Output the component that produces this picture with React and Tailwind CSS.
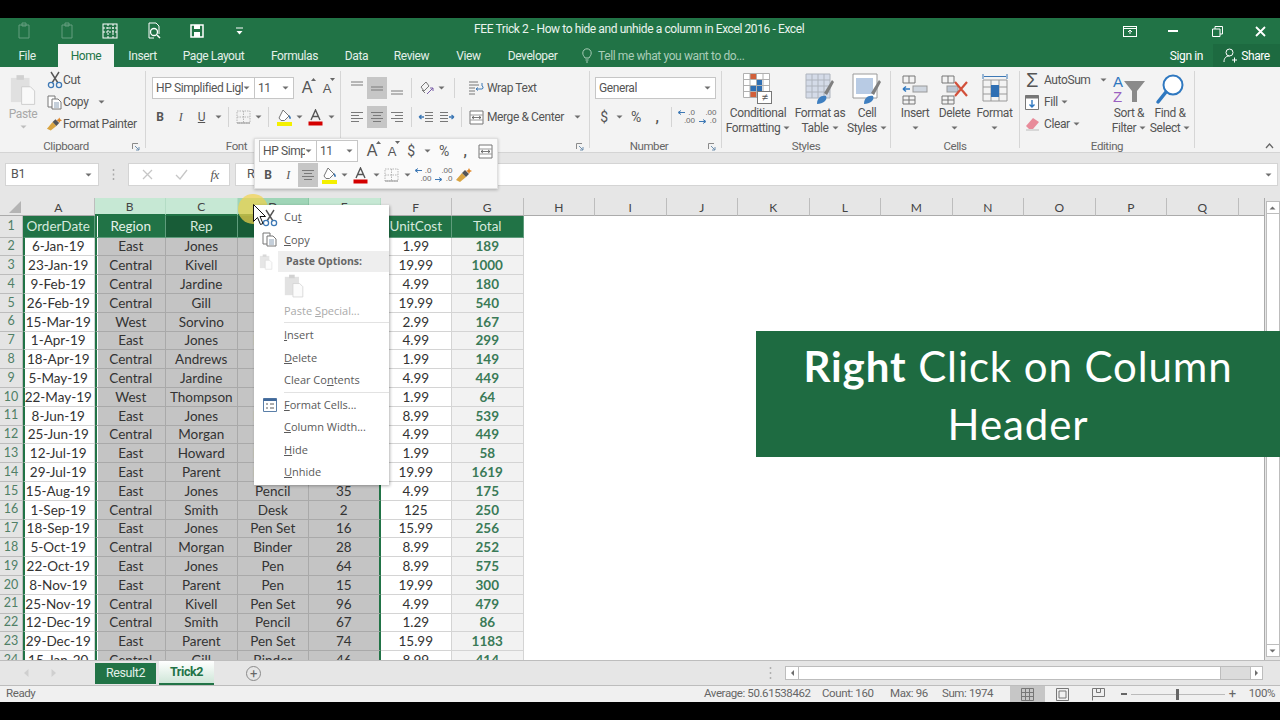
import clsx from 'clsx'

const TABS = [
  ['Insert', 'w-[57px]'],
  ['Page Layout', 'w-[85px]'],
  ['Formulas', 'w-[77px]'],
  ['Data', 'w-[47px]'],
  ['Review', 'w-[63px]'],
  ['View', 'w-[51px]'],
  ['Developer', 'w-[77px]'],
]

const COLS = ['A', 'B', 'C', 'D', 'E', 'F', 'G', 'H', 'I', 'J', 'K', 'L', 'M', 'N', 'O', 'P', 'Q']

const HEAD = ['OrderDate', 'Region', 'Rep', 'Item', 'Units', 'UnitCost', 'Total']

const ROWS = [
  ['6-Jan-19', 'East', 'Jones', 'Pencil', '95', '1.99', '189'],
  ['23-Jan-19', 'Central', 'Kivell', 'Binder', '50', '19.99', '1000'],
  ['9-Feb-19', 'Central', 'Jardine', 'Pencil', '36', '4.99', '180'],
  ['26-Feb-19', 'Central', 'Gill', 'Pen', '27', '19.99', '540'],
  ['15-Mar-19', 'West', 'Sorvino', 'Pencil', '56', '2.99', '167'],
  ['1-Apr-19', 'East', 'Jones', 'Binder', '60', '4.99', '299'],
  ['18-Apr-19', 'Central', 'Andrews', 'Pencil', '75', '1.99', '149'],
  ['5-May-19', 'Central', 'Jardine', 'Pencil', '90', '4.99', '449'],
  ['22-May-19', 'West', 'Thompson', 'Pencil', '32', '1.99', '64'],
  ['8-Jun-19', 'East', 'Jones', 'Binder', '60', '8.99', '539'],
  ['25-Jun-19', 'Central', 'Morgan', 'Pencil', '90', '4.99', '449'],
  ['12-Jul-19', 'East', 'Howard', 'Binder', '29', '1.99', '58'],
  ['29-Jul-19', 'East', 'Parent', 'Binder', '81', '19.99', '1619'],
  ['15-Aug-19', 'East', 'Jones', 'Pencil', '35', '4.99', '175'],
  ['1-Sep-19', 'Central', 'Smith', 'Desk', '2', '125', '250'],
  ['18-Sep-19', 'East', 'Jones', 'Pen Set', '16', '15.99', '256'],
  ['5-Oct-19', 'Central', 'Morgan', 'Binder', '28', '8.99', '252'],
  ['22-Oct-19', 'East', 'Jones', 'Pen', '64', '8.99', '575'],
  ['8-Nov-19', 'East', 'Parent', 'Pen', '15', '19.99', '300'],
  ['25-Nov-19', 'Central', 'Kivell', 'Pen Set', '96', '4.99', '479'],
  ['12-Dec-19', 'Central', 'Smith', 'Pencil', '67', '1.29', '86'],
  ['29-Dec-19', 'East', 'Parent', 'Pen Set', '74', '15.99', '1183'],
  ['15-Jan-20', 'Central', 'Gill', 'Binder', '46', '8.99', '414'],
]

function Chev({ className }) {
  return (
    <svg width="7" height="4" viewBox="0 0 7 4" className={clsx('shrink-0', className)}>
      <path d="M0.5 0.5h6L3.5 3.5z" fill="#6e6e6e" />
    </svg>
  )
}

function Slot({ w, className, children }) {
  return <div className={clsx('flex items-center justify-center h-full shrink-0', w, className)}>{children}</div>
}

function Sep({ w = 'w-[9px]' }) {
  return (
    <Slot w={w}>
      <div className="w-px h-[20px] bg-[#d4d4d4]" />
    </Slot>
  )
}

function Launcher() {
  return (
    <svg width="8" height="8" viewBox="0 0 8 8" className="shrink-0 mr-[5px]">
      <path d="M0.5 6V0.5H6" fill="none" stroke="#8a8a8a" />
      <path d="M3 3l4 4M4 7h3V4" fill="none" stroke="#6f8fae" />
    </svg>
  )
}

function Group({ w, label, launcher, className, children }) {
  return (
    <div className={clsx('flex flex-col my-[4px] border-r border-[#d6d6d6] shrink-0', w)}>
      <div className={clsx('h-[71px] shrink-0', className)}>{children}</div>
      <div className="h-[10px] shrink-0 flex items-center text-[11.5px] text-[#666]">
        <span className="flex-1 text-center">{label}</span>
        {launcher && <Launcher />}
      </div>
    </div>
  )
}

function Combo({ w, text, className }) {
  return (
    <div className={clsx('h-[22px] bg-white border border-[#c6c6c6] flex items-center justify-between pl-[3px] pr-[4px] text-[12px] text-[#555] shrink-0', w, className)}>
      <span className="whitespace-nowrap overflow-hidden">{text}</span>
      <Chev />
    </div>
  )
}

function GrowA({ down }) {
  return (
    <span className="relative text-[#555] font-['Liberation_Sans',sans-serif]">
      <span className={down ? 'text-[13px]' : 'text-[16px]'}>A</span>
      <svg width="5" height="3" viewBox="0 0 5 3" className="absolute -right-[4px] top-[2px]">
        <path d={down ? 'M0 0h5L2.5 3z' : 'M0 3h5L2.5 0z'} fill="#666" />
      </svg>
    </span>
  )
}

function Lines({ kind, blue }) {
  const x = kind === 'left' ? [[1, 13], [1, 9], [1, 13], [1, 9]] : kind === 'right' ? [[1, 13], [5, 13], [1, 13], [5, 13]] : [[1, 13], [3, 11], [1, 13], [3, 11]]
  return (
    <svg width="14" height="12" viewBox="0 0 14 12">
      {x.map(([a, b], i) => (
        <path key={i} d={`M${a} ${1.5 + i * 3}H${b}`} stroke={blue ? '#6b8fb5' : '#7a7a7a'} />
      ))}
    </svg>
  )
}

function HLines({ y }) {
  return (
    <svg width="14" height="20" viewBox="0 0 14 20">
      {[0, 3].map((d) => (
        <path key={d} d={`M1 ${y + d}H13`} stroke="#7a7a7a" />
      ))}
    </svg>
  )
}

function PasteIcon({ w = 28, h = 34 }) {
  return (
    <svg width={w} height={h} viewBox="0 0 28 34">
      <rect x="1" y="4" width="20" height="26" fill="#dcdcdc" />
      <rect x="7" y="1" width="8" height="5" fill="#c8c8c8" />
      <path d="M12.5 13.5H22l4.5 4.5v14.5h-14z" fill="#fbfbfb" stroke="#c4c4c4" />
    </svg>
  )
}

function CutIcon() {
  return (
    <svg width="16" height="18" viewBox="0 0 16 18">
      <path d="M4 1l7 11M12 1L5 12" stroke="#555" strokeWidth="1.4" fill="none" />
      <circle cx="4" cy="14" r="2.6" fill="none" stroke="#3d78b5" strokeWidth="1.3" />
      <circle cx="12" cy="14" r="2.6" fill="none" stroke="#3d78b5" strokeWidth="1.3" />
    </svg>
  )
}

function CopyIcon() {
  return (
    <svg width="16" height="15" viewBox="0 0 16 15">
      <path d="M1 1h7v11H1z" fill="#fff" stroke="#777" />
      <path d="M5 4h6l3 3v7H5z" fill="#fff" stroke="#777" />
      <path d="M7 8h5M7 10h5M7 12h5" stroke="#8a9fb5" />
    </svg>
  )
}

function BrushIcon() {
  return (
    <svg width="18" height="16" viewBox="0 0 18 16">
      <path d="M1 13l6-7 4 4-6 5z" fill="#d9a441" />
      <path d="M7 6l3-3 4 4-3 3z" fill="#555" />
      <path d="M14 1l1 2 2 1-2 1-1 2-1-2-2-1 2-1z" fill="#e0872a" />
    </svg>
  )
}

function BorderIcon() {
  return (
    <svg width="15" height="14" viewBox="0 0 15 14">
      <path d="M1 1h13v12H1zM7.5 1v12M1 7h13" fill="none" stroke="#b5b5b5" strokeDasharray="1.5 1" />
      <path d="M1 13h13" stroke="#999" />
    </svg>
  )
}

function FillIcon() {
  return (
    <svg width="17" height="17" viewBox="0 0 17 17">
      <path d="M7 1l6 6-4.5 4.5H5L3 9z" fill="#fff" stroke="#777" />
      <path d="M13 6c1.5 1 2.5 3 1.500 4-1 .5-2-1-1.500-4z" fill="#3d78b5" />
      <rect x="1" y="13" width="15" height="4" fill="#f4f000" />
    </svg>
  )
}

function ColorA() {
  return (
    <svg width="15" height="17" viewBox="0 0 15 17">
      <path d="M3 11L7.500 1 12 11M4.800 7.500h5.400" fill="none" stroke="#555" strokeWidth="1.400" />
      <rect x="0.500" y="12.500" width="14" height="4" fill="#d40000" />
    </svg>
  )
}

function DecIcon({ more }) {
  return (
    <span className="relative w-[20px] h-[16px] text-[8px] leading-[8px] tracking-normal text-[#666] font-['Liberation_Sans',sans-serif] flex flex-col items-end pr-[1px]">
      <span>{more ? '.00' : '.0'}</span>
      <span>{more ? '.0' : '.00'}</span>
      <svg width="8" height="5" viewBox="0 0 8 5" className={more ? 'absolute left-[1px] bottom-[1px]' : 'absolute left-[1px] top-[1px]'}>
        <path d={more ? 'M0 2.500h6M4 0.500l3 2-3 2' : 'M8 2.500H2M4 0.500l-3 2 3 2'} fill="none" stroke="#3d78b5" />
      </svg>
    </span>
  )
}

function MergeIcon() {
  return (
    <svg width="15" height="15" viewBox="0 0 15 15">
      <path d="M1 1h13v13H1z" fill="#fff" stroke="#777" />
      <path d="M1 5h13M1 10h13" stroke="#999" />
      <path d="M3 7.500h9M3 7.500l2-1.500M3 7.500l2 1.500M12 7.500l-2-1.500M12 7.500l-2 1.500" stroke="#555" fill="none" strokeWidth="0.800" />
    </svg>
  )
}

function WrapIcon() {
  return (
    <svg width="16" height="15" viewBox="0 0 16 15">
      <path d="M1 1h9M1 4h10M1 7h6M1 10h6M1 13h6" stroke="#777" />
      <path d="M8 8h5a1.500 1.500 0 0 0 1-3V2M8 8l2-1.500M8 8l2 1.500" stroke="#3d78b5" fill="none" />
    </svg>
  )
}

function OrientIcon() {
  return (
    <svg width="15" height="15" viewBox="0 0 15 15">
      <path d="M2 6l5-5 3 4-5 5zM3 9l3 3" fill="none" stroke="#777" />
      <path d="M8 13l6-6" stroke="#7a5ea8" />
      <path d="M11 7h3v3" stroke="#7a5ea8" fill="none" />
    </svg>
  )
}

function IndentIcon({ out }) {
  return (
    <svg width="16" height="13" viewBox="0 0 16 13">
      <path d={out ? 'M7 1.500h8M7 4.500h8M7 7.500h8M7 10.500h8' : 'M1 1.500h8M1 4.500h8M1 7.500h8M1 10.500h8'} stroke="#777" />
      <path d={out ? 'M6 6H1M1 6l2.500-2M1 6l2.500 2' : 'M10 6h5M15 6l-2.500-2M15 6l-2.500 2'} stroke="#3d78b5" fill="none" strokeWidth="1.300" />
    </svg>
  )
}

function GridLines({ x, y, w, h, cols, rows, stroke = '#a8a8a8' }) {
  const parts = []
  for (let i = 0; i <= cols; i++) parts.push(`M${x + (i * w) / cols} ${y}v${h}`)
  for (let i = 0; i <= rows; i++) parts.push(`M${x} ${y + (i * h) / rows}h${w}`)
  return <path d={parts.join('')} stroke={stroke} fill="none" />
}

function CondIcon() {
  return (
    <svg width="30" height="32" viewBox="0 0 30 32">
      <rect x="0.500" y="0.500" width="26" height="24" fill="#fff" />
      <rect x="7" y="1" width="6" height="5.500" fill="#d2603a" />
      <rect x="13" y="7" width="6" height="5.500" fill="#2f6fb3" />
      <rect x="7" y="13" width="6" height="5.500" fill="#2f6fb3" />
      <rect x="13" y="13" width="6" height="5.500" fill="#2f6fb3" />
      <rect x="7" y="19" width="6" height="5.500" fill="#d2603a" />
      <GridLines x={0.500} y={0.500} w={26} h={24} cols={4} rows={4} stroke="#b0b0b0" />
      <rect x="14.500" y="18.500" width="14" height="12" fill="#fff" stroke="#777" />
      <text x="21.500" y="28" fontSize="11" textAnchor="middle" fill="#555" fontFamily="Liberation Sans">≠</text>
    </svg>
  )
}

function TableIcon({ styles }) {
  return (
    <svg width="30" height="32" viewBox="0 0 30 32">
      <rect x="1" y="1" width="24" height="24" fill={styles ? '#fff' : '#d4dbe8'} />
      {styles && <rect x="4" y="5" width="17" height="16" fill="#b8cbe4" />}
      {!styles && <GridLines x={1} y={1} w={24} h={24} cols={4} rows={4} stroke="#aeb4bd" />}
      {styles && <path d="M1 1h24v24H1z" fill="none" stroke="#9a9a9a" />}
      <path d="M19 20L27 7l2 2-7 13z" fill="#7f7f7f" />
      <path d="M12 31c0-6 4-9 9-8 2 4-3 8-9 8z" fill="#3f7fc0" />
    </svg>
  )
}

function InsertIcon() {
  return (
    <svg width="26" height="30" viewBox="0 0 26 30">
      <GridLines x={1} y={1} w={12} h={7} cols={2} rows={1} stroke="#777" />
      <GridLines x={1} y={21} w={12} h={8} cols={2} rows={2} stroke="#777" />
      <rect x="11" y="11" width="14" height="6" fill="#cfd6df" stroke="#999" />
      <path d="M1 14h7M1 14l3-2.500M1 14l3 2.500" stroke="#2f78c0" strokeWidth="1.500" fill="none" />
    </svg>
  )
}

function DeleteIcon() {
  return (
    <svg width="28" height="30" viewBox="0 0 28 30">
      <GridLines x={1} y={1} w={12} h={7} cols={2} rows={1} stroke="#777" />
      <GridLines x={1} y={21} w={12} h={8} cols={2} rows={2} stroke="#777" />
      <rect x="6" y="11" width="11" height="6" fill="#bcc6d2" stroke="#999" />
      <path d="M14 7l12 14M26 7L14 21" stroke="#d2503a" strokeWidth="2.200" />
    </svg>
  )
}

function FormatIcon() {
  return (
    <svg width="28" height="32" viewBox="0 0 28 32">
      <path d="M2 1v5M26 1v5M3 3.500h22" stroke="#3d78b5" fill="none" />
      <GridLines x={2} y={7} w={24} h={21} cols={3} rows={3} stroke="#999" />
      <rect x="10" y="12" width="8" height="12" fill="#2f6fb3" />
    </svg>
  )
}

function SortIcon() {
  return (
    <svg width="34" height="32" viewBox="0 0 34 32">
      <text x="1" y="14" fontSize="15" fill="#2f78c0" fontFamily="Liberation Sans">A</text>
      <text x="1" y="29" fontSize="15" fill="#9a5fc0" fontFamily="Liberation Sans">Z</text>
      <path d="M12 8h21l-8 10v11h-5V18z" fill="#8a8a8a" />
    </svg>
  )
}

function FindIcon() {
  return (
    <svg width="30" height="32" viewBox="0 0 30 32">
      <circle cx="18" cy="12" r="9.500" fill="#fff" stroke="#2f78c0" strokeWidth="2" />
      <path d="M11 19L3 29" stroke="#2f78c0" strokeWidth="3.500" strokeLinecap="round" />
    </svg>
  )
}

function BigBtn({ w, icon, lines, chevRow }) {
  return (
    <div className={clsx('flex flex-col items-center shrink-0', w)}>
      <div className="h-[34px] flex items-end justify-center">{icon}</div>
      {lines.map((l, i) => (
        <div key={i} className="h-[15px] flex items-center gap-[3px] whitespace-nowrap text-[12px]">
          {l}
          {i === 1 && <Chev />}
        </div>
      ))}
      {chevRow && (
        <div className="h-[15px] flex items-center">
          <Chev />
        </div>
      )}
    </div>
  )
}

function TitleBar() {
  return (
    <div className="h-[26px] bg-[#217346] flex items-center relative text-white shrink-0">
      <div className="flex items-center h-full pl-[16px] text-white">
        <svg width="18" height="18" viewBox="0 0 18 18" className="opacity-30">
          <path d="M3 3h10v13H3zM6 1h4v3H6z" fill="none" stroke="#fff" />
        </svg>
        <svg width="18" height="18" viewBox="0 0 18 18" className="opacity-30 ml-[25px]">
          <path d="M3 3h10v13H3zM6 1h4v3H6z" fill="none" stroke="#fff" />
        </svg>
        <svg width="18" height="18" viewBox="0 0 18 18" className="ml-[24px]">
          <rect x="2" y="2" width="14" height="14" fill="none" stroke="#fff" />
          <path d="M2 6h14M2 10h14M7 2v14M12 2v14" stroke="#fff" strokeDasharray="2 1" />
        </svg>
        <svg width="18" height="18" viewBox="0 0 18 18" className="ml-[26px]">
          <path d="M4 1h7l3 3v8M4 1v15h5" fill="none" stroke="#fff" />
          <circle cx="9" cy="10" r="3.500" fill="none" stroke="#fff" strokeWidth="1.300" />
          <path d="M12 13l3 3" stroke="#fff" strokeWidth="1.500" />
        </svg>
        <svg width="16" height="16" viewBox="0 0 16 16" className="ml-[26px]">
          <path d="M2 2h12v12H2z" fill="none" stroke="#fff" strokeWidth="1.500" />
          <path d="M5 2h6v4H5zM5 9h6v5H5z" fill="#fff" />
        </svg>
        <svg width="7" height="8" viewBox="0 0 7 8" className="ml-[31px]">
          <path d="M0 1h7" stroke="#fff" />
          <path d="M0.500 4h6L3.500 7.500z" fill="#fff" />
        </svg>
      </div>
      <div className="absolute left-[474px] top-[2px] text-[12px] leading-[18px] whitespace-nowrap text-[#eaf3ee]">
        FEE Trick 2 - How to hide and unhide a column in Excel 2016 - Excel
      </div>
      <div className="ml-auto flex items-center h-full">
        <svg width="14" height="11" viewBox="0 0 14 11">
          <rect x="0.500" y="0.500" width="13" height="10" fill="none" stroke="#fff" />
          <path d="M0.500 2.500h13" stroke="#fff" />
          <path d="M7 4v4M5 6l2-2 2 2" fill="none" stroke="#fff" />
        </svg>
        <div className="w-[10px] h-[2px] bg-white ml-[31px]" />
        <svg width="11" height="11" viewBox="0 0 11 11" className="ml-[34px]">
          <path d="M3 3V0.500h7.500V8H8M0.500 3H8v7.500H0.500z" fill="none" stroke="#fff" />
        </svg>
        <svg width="11" height="11" viewBox="0 0 11 11" className="ml-[32px] mr-[14px]">
          <path d="M1 1l9 9M10 1l-9 9" stroke="#fff" strokeWidth="1.800" />
        </svg>
      </div>
    </div>
  )
}

function TabsRow() {
  return (
    <div className="h-[23px] bg-[#217346] flex items-stretch text-[12px] text-[#e4f0e9] shrink-0">
      <div className="w-[54px] flex items-center justify-center">File</div>
      <div className="ml-[4px] w-[56px] bg-[#f3f3f3] text-[#217346] flex items-center justify-center">Home</div>
      {TABS.map(([t, w]) => (
        <div key={t} className={clsx('flex items-center justify-center', w)}>
          {t}
        </div>
      ))}
      <div className="flex items-center ml-[11px] text-[#a9cdb8]">
        <svg width="10" height="15" viewBox="0 0 10 15" className="mr-[6px]">
          <path d="M3 10C2 8 .8 7.500 .8 5a4.200 4.200 0 0 1 8.400 0c0 2.500-1.200 3-2.200 5zM3.500 12h3M4 14h2" fill="none" stroke="#a9cdb8" />
        </svg>
        Tell me what you want to do...
      </div>
      <div className="ml-auto flex items-stretch">
        <div className="flex items-center mr-[10px] text-white">Sign in</div>
        <div className="w-[67px] bg-[#1d6a40] flex items-center justify-center gap-[4px] text-white">
          <svg width="14" height="15" viewBox="0 0 14 15">
            <circle cx="6.500" cy="4.500" r="3.500" fill="none" stroke="#fff" />
            <path d="M1 14c0-4 2-6 5.500-6M9 12h5M11.500 9.500v5" fill="none" stroke="#fff" />
          </svg>
          Share
        </div>
      </div>
    </div>
  )
}

function Ribbon() {
  return (
    <div className="h-[86px] bg-[#f3f3f3] border-b border-[#d4d4d4] flex text-[#555] shrink-0">
      <Group w="w-[146px]" label="Clipboard" launcher className="flex">
        <div className="w-[46px] flex flex-col items-center text-[12px] text-[#a8a8a8]">
          <div className="mt-[3px] opacity-80">
            <PasteIcon w={26} h={32} />
          </div>
          <span className="leading-[14px] mt-[1px]">Paste</span>
          <Chev className="opacity-40 mt-[4px]" />
        </div>
        <div className="-mt-[2px] flex flex-col text-[12px]">
          {[
            ['Cut', <CutIcon key="c" />],
            ['Copy', <CopyIcon key="p" />, true],
            ['Format Painter', <BrushIcon key="b" />],
          ].map(([t, ic, ch]) => (
            <div key={t} className="h-[22px] flex items-center whitespace-nowrap">
              <span className="w-[17px] flex justify-center">{ic}</span>
              <span>{t}</span>
              {ch && <Chev className="ml-[10px]" />}
            </div>
          ))}
        </div>
      </Group>

      <Group w="w-[195px]" label="Font" launcher>
        <div className="flex items-center h-[22px] mt-[6px] pl-[6px]">
          <Combo w="w-[103px]" text="HP Simplified Ligl" />
          <Combo w="w-[40px]" text="11" className="-ml-px" />
          <Slot w="w-[20px]" className="ml-[3px]">
            <GrowA />
          </Slot>
          <Slot w="w-[20px]">
            <GrowA down />
          </Slot>
        </div>
        <div className="flex items-center h-[22px] mt-[7px] pl-[4px] text-[12px]">
          <Slot w="w-[20px]" className="font-bold">B</Slot>
          <Slot w="w-[21px]" className="italic font-['Liberation_Serif',serif]">I</Slot>
          <Slot w="w-[21px]" className="underline">U</Slot>
          <Slot w="w-[12px]"><Chev /></Slot>
          <Sep />
          <Slot w="w-[20px]"><BorderIcon /></Slot>
          <Slot w="w-[10px]"><Chev /></Slot>
          <Sep w="w-[11px]" />
          <Slot w="w-[20px]"><FillIcon /></Slot>
          <Slot w="w-[10px]"><Chev /></Slot>
          <Slot w="w-[22px]"><ColorA /></Slot>
          <Slot w="w-[10px]"><Chev /></Slot>
        </div>
      </Group>

      <Group w="w-[249px]" label="Alignment" launcher>
        <div className="flex items-center h-[22px] mt-[6px] pl-[5px]">
          <Slot w="w-[21px]"><HLines y={4} /></Slot>
          <Slot w="w-[20px]" className="bg-[#c6c6c6]"><HLines y={9} /></Slot>
          <Slot w="w-[20px]"><HLines y={13} /></Slot>
          <Sep />
          <Slot w="w-[20px]"><OrientIcon /></Slot>
          <Slot w="w-[10px]"><Chev /></Slot>
          <Sep w="w-[16px]" />
          <Slot w="w-[25px]" className="justify-end pr-[3px]"><WrapIcon /></Slot>
          <span className="text-[12px] whitespace-nowrap">Wrap Text</span>
        </div>
        <div className="flex items-center h-[22px] mt-[7px] pl-[5px]">
          <Slot w="w-[21px]"><Lines kind="left" /></Slot>
          <Slot w="w-[20px]" className="bg-[#c6c6c6]"><Lines kind="center" /></Slot>
          <Slot w="w-[20px]"><Lines kind="right" /></Slot>
          <Sep />
          <Slot w="w-[20px]"><IndentIcon out /></Slot>
          <Slot w="w-[21px]"><IndentIcon /></Slot>
          <Sep w="w-[9px]" />
          <Slot w="w-[21px]" className="justify-end pr-[3px]"><MergeIcon /></Slot>
          <span className="text-[12px] whitespace-nowrap">Merge &amp; Center</span>
          <Chev className="ml-[10px]" />
        </div>
      </Group>

      <Group w="w-[132px]" label="Number" launcher>
        <div className="mt-[6px] pl-[5px]">
          <Combo w="w-[121px]" text="General" />
        </div>
        <div className="flex items-center h-[22px] mt-[7px] pl-[4px] text-[14px]">
          <Slot w="w-[20px]">$</Slot>
          <Slot w="w-[10px]"><Chev /></Slot>
          <Slot w="w-[24px]">%</Slot>
          <Slot w="w-[18px]" className="font-bold">,</Slot>
          <Sep w="w-[10px]" />
          <Slot w="w-[20px]"><DecIcon /></Slot>
          <Slot w="w-[23px]"><DecIcon more /></Slot>
        </div>
      </Group>

      <Group w="w-[169px]" label="Styles" className="flex pl-px">
        <BigBtn w="w-[70px]" icon={<CondIcon />} lines={['Conditional', 'Formatting']} />
        <BigBtn w="w-[54px]" icon={<TableIcon />} lines={['Format as', 'Table']} />
        <BigBtn w="w-[40px]" icon={<TableIcon styles />} lines={['Cell', 'Styles']} />
      </Group>

      <Group w="w-[129px]" label="Cells" className="flex pl-[4px]">
        <BigBtn w="w-[40px]" icon={<InsertIcon />} lines={['Insert']} chevRow />
        <BigBtn w="w-[39px]" icon={<DeleteIcon />} lines={['Delete']} chevRow />
        <BigBtn w="w-[41px]" icon={<FormatIcon />} lines={['Format']} chevRow />
      </Group>

      <Group w="w-[175px]" label="Editing" className="flex">
        <div className="w-[88px] -mt-[2px] flex flex-col text-[12px]">
          <div className="h-[22px] flex items-center">
            <span className="w-[24px] text-center text-[20px] leading-none font-['Liberation_Sans',sans-serif]">Σ</span>
            AutoSum
            <Chev className="ml-[9px]" />
          </div>
          <div className="h-[22px] flex items-center">
            <span className="w-[24px] flex justify-center">
              <svg width="14" height="15" viewBox="0 0 14 15">
                <path d="M0.500 0.500h13v14h-13z" fill="#fff" stroke="#777" />
                <path d="M0.500 0.500h13v3h-13z" fill="#777" />
                <path d="M7 5v7M4.500 9.500L7 12l2.500-2.500" fill="none" stroke="#2f78c0" strokeWidth="1.400" />
              </svg>
            </span>
            Fill
            <Chev className="ml-[3px]" />
          </div>
          <div className="h-[22px] flex items-center">
            <span className="w-[24px] flex justify-center">
              <svg width="15" height="14" viewBox="0 0 15 14">
                <path d="M1 9l7-8 6 4-6 7H4z" fill="#e88b9a" />
                <path d="M1 13h13" stroke="#bbb" />
              </svg>
            </span>
            Clear
            <Chev className="ml-[3px]" />
          </div>
        </div>
        <BigBtn w="w-[42px]" icon={<SortIcon />} lines={['Sort &', 'Filter']} />
        <BigBtn w="w-[40px]" icon={<FindIcon />} lines={['Find &', 'Select']} />
      </Group>

      <div className="flex-1 flex items-end justify-end pr-[6px] pb-[3px]">
        <svg width="9" height="6" viewBox="0 0 9 6">
          <path d="M1 5l3.500-4L8 5" fill="none" stroke="#666" strokeWidth="1.300" />
        </svg>
      </div>
    </div>
  )
}

function FormulaBar() {
  return (
    <div className="h-[45px] bg-[#e6e6e6] flex items-center pb-[2px] pl-[5px] pr-[2px] text-[12.5px] text-[#555] shrink-0">
      <div className="w-[94px] h-[23px] bg-white border border-[#d4d4d4] flex items-center justify-between pl-[5px] pr-[6px]">
        B1
        <Chev />
      </div>
      <div className="w-[29px] flex justify-center">
        <svg width="3" height="11" viewBox="0 0 3 11">
          <path d="M1.500 0v2M1.500 4.500v2M1.500 9v2" stroke="#aaa" strokeWidth="1.500" />
        </svg>
      </div>
      <div className="w-[102px] h-[23px] bg-white border border-[#d4d4d4] flex items-center justify-between pl-[13px] pr-[10px]">
        <svg width="11" height="11" viewBox="0 0 11 11">
          <path d="M1 1l9 9M10 1l-9 9" stroke="#c6c6c6" strokeWidth="1.300" />
        </svg>
        <svg width="13" height="11" viewBox="0 0 13 11">
          <path d="M1 6l4 4 7-9" stroke="#c6c6c6" strokeWidth="1.300" fill="none" />
        </svg>
        <span className="italic font-['Liberation_Serif',serif] text-[13px]">fx</span>
      </div>
      <div className="flex-1 h-[23px] ml-[5px] bg-white border border-[#d4d4d4] flex items-center justify-between pl-[11px] pr-[5px]">
        R
        <Chev />
      </div>
    </div>
  )
}

function ColHeaders() {
  return (
    <div className="h-[18px] flex text-[12px] text-[#444]">
      <div className="w-[23px] shrink-0 bg-[#e6e6e6] flex items-end justify-end p-[2px] border-b border-[#ababab]">
        <svg width="12" height="12" viewBox="0 0 12 12">
          <path d="M12 0v12H0z" fill="#b4b4b4" />
        </svg>
      </div>
      {COLS.map((c) => (
        <div
          key={c}
          className={clsx(
            'w-[71.5px] shrink-0 flex items-center justify-center border-r pt-[2px]',
            c === 'D' && 'bg-[#9fd5b7] border-[#8cc6a6] border-b-2 border-b-[#217346]',
            (c === 'B' || c === 'C' || c === 'E') && 'bg-[#c6e8d4] border-[#b4dcc5] border-b-2 border-b-[#217346]',
            !'BCDE'.includes(c) && 'bg-[#e6e6e6] border-[#bdbdbd] border-b border-b-[#ababab]'
          )}
        >
          {c}
        </div>
      ))}
      <div className="flex-1 bg-[#e6e6e6] border-b border-[#ababab]" />
    </div>
  )
}

function SheetRow({ n, cells, head }) {
  return (
    <div className={clsx('flex shrink-0', head ? 'h-[21.700px]' : 'h-[18.800px]')}>
      <div className="w-[23px] shrink-0 bg-[#e4e4e4] border-b border-r border-[#bcbcbc] flex items-center justify-center text-[12.500px] text-[#4f7f66]">
        {n}
      </div>
      {cells.map((t, i) => {
        const sel = i >= 1 && i <= 4
        return (
          <div
            key={i}
            className={clsx(
              'w-[71.5px] shrink-0 flex items-center justify-center whitespace-nowrap overflow-hidden text-[13.500px]',
              head
                ? clsx('border-r border-b border-[#5f9c7c]', i === 1 ? 'text-[#e5f1ea]' : 'text-[#d5e9dd]', i >= 2 && i <= 4 ? 'bg-[#185c37]' : 'bg-[#217346]')
                : clsx(
                    'border-r border-b',
                    sel ? 'bg-[#c4c4c4] border-[#a9a9a9]' : 'border-[#d4d4d4]',
                    i === 6 ? 'bg-[#f2f2f2] text-[#3a7a57] font-bold' : 'text-[#333]'
                  ),
              i === 0 && 'border-l-2 border-l-[#217346] pr-[2px]',
              i === 1 && 'border-l-2 border-l-[#217346] shadow-[inset_1px_0_0_#fff]',
              i === 4 && 'border-r-2 border-r-[#217346]'
            )}
          >
            {t}
          </div>
        )
      })}
    </div>
  )
}

function VScroll() {
  return (
    <div className="w-[16px] shrink-0 bg-[#e6e6e6] border-l border-[#ababab] flex flex-col items-center py-[3px]">
      <div className="w-[14px] h-[13px] bg-white border border-[#bdbdbd] flex items-center justify-center">
        <Chev className="rotate-180" />
      </div>
      <div className="w-[14px] flex-1 bg-white border-x border-[#bdbdbd]" />
      <div className="w-[14px] h-[13px] bg-white border border-[#bdbdbd] flex items-center justify-center">
        <Chev />
      </div>
    </div>
  )
}

function Sheet() {
  return (
    <div className="h-[462px] flex overflow-hidden font-[Lato,sans-serif] tracking-normal shrink-0">
      <div className="flex-1 flex flex-col bg-white overflow-hidden">
        <ColHeaders />
        <SheetRow n={1} cells={HEAD} head />
        {ROWS.map((r, i) => (
          <SheetRow key={i} n={i + 2} cells={r} />
        ))}
      </div>
      <VScroll />
    </div>
  )
}

function TabBar() {
  return (
    <div className="h-[26px] bg-[#e6e6e6] border-t border-b border-[#bdbdbd] flex items-center relative shrink-0">
      <svg width="5" height="8" viewBox="0 0 5 8" className="ml-[24px]">
        <path d="M4.500 0v8L0 4z" fill="#cfcfcf" />
      </svg>
      <svg width="5" height="8" viewBox="0 0 5 8" className="ml-[22px]">
        <path d="M0.500 0v8L5 4z" fill="#cfcfcf" />
      </svg>
      <div className="ml-[39px] w-[61px] h-[21px] bg-[#217346] text-[#e4f0e9] text-[12.500px] flex items-center justify-center">
        Result2
      </div>
      <div className="ml-[3px] w-[55px] h-[24px] bg-gradient-to-b from-white to-[#cfe6d8] border-b-2 border-[#217346] text-[#217346] font-bold text-[12.500px] flex items-center justify-center">
        Trick2
      </div>
      <div className="ml-[32px] w-[15px] h-[15px] rounded-full border border-[#8a8a8a] flex items-center justify-center text-[#666] text-[13px] leading-none">
        +
      </div>
      <svg width="3" height="13" viewBox="0 0 3 13" className="ml-[508px]">
        <path d="M1.500 0v2M1.500 5v2M1.500 10v2" stroke="#b0b0b0" strokeWidth="1.500" />
      </svg>
      <div className="ml-[13px] w-[478px] h-[14px] flex">
        <div className="w-[14px] bg-white border border-[#bdbdbd] flex items-center justify-center">
          <Chev className="rotate-90" />
        </div>
        <div className="flex-1 flex border-y border-[#bdbdbd]">
          <div className="w-[422px] bg-white border-r border-[#bdbdbd]" />
          <div className="flex-1 bg-[#dcdcdc]" />
        </div>
        <div className="w-[13px] bg-white border border-[#bdbdbd] flex items-center justify-center">
          <Chev className="-rotate-90" />
        </div>
      </div>
    </div>
  )
}

function StatusBar() {
  return (
    <div className="h-[16px] bg-[#f0f0f0] flex items-center text-[11.500px] text-[#666] overflow-hidden shrink-0">
      <span className="w-[704px] pl-[6px] shrink-0">Ready</span>
      <span className="w-[118px] shrink-0 whitespace-nowrap">Average: 50.61538462</span>
      <span className="w-[68px] shrink-0 whitespace-nowrap">Count: 160</span>
      <span className="w-[52px] shrink-0 whitespace-nowrap">Max: 96</span>
      <span className="whitespace-nowrap">Sum: 1974</span>
      <div className="ml-auto flex items-center h-full">
        <div className="w-[35px] h-full bg-[#c6c6c6] flex items-center justify-center">
          <svg width="13" height="13" viewBox="0 0 13 13">
            <GridLines x={0.500} y={0.500} w={12} h={12} cols={3} rows={3} stroke="#777" />
          </svg>
        </div>
        <svg width="13" height="13" viewBox="0 0 13 13" className="ml-[11px]">
          <path d="M0.500 0.500h12v12h-12zM3 3h7v7H3z" fill="none" stroke="#777" />
        </svg>
        <svg width="13" height="13" viewBox="0 0 13 13" className="ml-[23px]">
          <path d="M0.500 0.500h12v8H0.500zM0.500 8.500v4M4.500 0.500v4h4v-4" fill="none" stroke="#777" />
        </svg>
        <div className="w-[6px] h-[1.500px] bg-[#666] ml-[16px]" />
        <div className="w-[94px] h-px bg-[#bbb] ml-[4px] flex items-center justify-center">
          <div className="w-[3px] h-[11px] bg-[#666]" />
        </div>
        <span className="ml-[3px] text-[13px] w-[9px] text-center">+</span>
        <span className="ml-[12px] mr-[5px]">100%</span>
      </div>
    </div>
  )
}

function MiniToolbar() {
  return (
    <div className="absolute left-[254px] top-[138px] w-[244px] h-[51px] bg-[#fafafa] border border-[#e0e0e0] shadow-[0_1px_3px_rgba(0,0,0,0.25)] text-[#555] z-10">
      <div className="flex items-center h-[22px] mt-[1px] pl-[4px]">
        <Combo w="w-[58px]" text="HP Simp" />
        <Combo w="w-[42px]" text="11" className="-ml-px" />
        <Slot w="w-[22px]" className="ml-[3px]"><GrowA /></Slot>
        <Slot w="w-[18px]"><GrowA down /></Slot>
        <Slot w="w-[20px]" className="text-[14px]">$</Slot>
        <Slot w="w-[12px]"><Chev /></Slot>
        <Slot w="w-[22px]" className="text-[14px]">%</Slot>
        <Slot w="w-[20px]" className="font-bold text-[14px]">,</Slot>
        <Slot w="w-[20px]"><MergeIcon /></Slot>
      </div>
      <div className="flex items-center h-[24px] mt-[1px] pl-[2px] text-[12px]">
        <Slot w="w-[20px]" className="font-bold ml-[1px]">B</Slot>
        <Slot w="w-[20px]" className="italic font-['Liberation_Serif',serif]">I</Slot>
        <Slot w="w-[20px]" className="bg-[#c6c6c6]"><Lines kind="center" /></Slot>
        <Slot w="w-[22px]"><FillIcon /></Slot>
        <Slot w="w-[8px]"><Chev /></Slot>
        <Slot w="w-[24px]"><ColorA /></Slot>
        <Slot w="w-[8px]"><Chev /></Slot>
        <Slot w="w-[22px]"><BorderIcon /></Slot>
        <Slot w="w-[10px]"><Chev /></Slot>
        <Slot w="w-[21px]"><DecIcon /></Slot>
        <Slot w="w-[21px]"><DecIcon more /></Slot>
        <Slot w="w-[20px]"><BrushIcon /></Slot>
      </div>
    </div>
  )
}

function MenuItem({ icon, dim, children, className }) {
  return (
    <div className={clsx('h-[22.300px] flex items-center shrink-0', dim ? 'text-[#aaa]' : 'text-[#5a5a5a]', className)}>
      <span className="w-[30px] flex justify-center shrink-0 pl-px">{icon}</span>
      {children}
    </div>
  )
}

function ContextMenu() {
  return (
    <div className="absolute left-[254px] top-[205px] w-[135px] h-[280px] bg-white shadow-[1px_1px_3px_rgba(0,0,0,0.3)] flex flex-col pt-[1.500px] text-[11px] tracking-normal font-['Open_Sans',sans-serif] z-20">
      <MenuItem icon={<CutIcon />}>
        Cu<u>t</u>
      </MenuItem>
      <MenuItem icon={<CopyIcon />}>
        <u>C</u>opy
      </MenuItem>
      <div className="h-[21px] flex items-center shrink-0">
        <span className="w-[24px] flex justify-center opacity-70">
          <PasteIcon w={14} h={16} />
        </span>
        <div className="flex-1 h-full bg-[#eeeeee] flex items-center pl-[8px] font-bold text-[#666] text-[10.500px]">
          Paste Options:
        </div>
      </div>
      <div className="h-[28px] pl-[30px] flex items-center shrink-0 opacity-80">
        <PasteIcon w={20} h={24} />
      </div>
      <MenuItem dim>
        Paste <u className="ml-[3px]">S</u>pecial...
      </MenuItem>
      <div className="h-px ml-[30px] bg-[#e2e2e2] mb-[1px] shrink-0" />
      <MenuItem>
        <u>I</u>nsert
      </MenuItem>
      <MenuItem>
        <u>D</u>elete
      </MenuItem>
      <MenuItem>
        Clear Co<u>n</u>tents
      </MenuItem>
      <div className="h-px ml-[30px] bg-[#e2e2e2] my-[1px] shrink-0" />
      <MenuItem
        icon={
          <svg width="14" height="14" viewBox="0 0 14 14">
            <path d="M0.500 0.500h13v13h-13z" fill="#fff" stroke="#5b7fa8" />
            <path d="M0.500 0.500h13v2.500h-13z" fill="#41699a" />
            <path d="M3 6h2M3 10h2M7 6h4M7 10h4" stroke="#5a5a5a" />
          </svg>
        }
      >
        <u>F</u>ormat Cells...
      </MenuItem>
      <MenuItem>
        <u>C</u>olumn Width...
      </MenuItem>
      <MenuItem>
        <u>H</u>ide
      </MenuItem>
      <MenuItem>
        <u>U</u>nhide
      </MenuItem>
    </div>
  )
}

function Pointer() {
  return (
    <>
      <div className="absolute left-[238px] top-[194px] w-[30px] h-[30px] rounded-full bg-[#f2d34a]/70 z-10" />
      <svg width="14" height="22" viewBox="0 0 14 22" className="absolute left-[253px] top-[204px] z-30">
        <path d="M0.500 0.500v17l4-4 3 7 2.500-1-3-7h5.500z" fill="#fff" stroke="#111" />
      </svg>
    </>
  )
}

export default function App() {
  return (
    <div className="relative w-[1280px] h-[720px] bg-black overflow-hidden flex flex-col font-[Roboto,sans-serif] tracking-[-0.4px]">
      <div className="h-[18px] shrink-0" />
      <TitleBar />
      <TabsRow />
      <Ribbon />
      <FormulaBar />
      <Sheet />
      <TabBar />
      <StatusBar />

      <MiniToolbar />
      <ContextMenu />
      <Pointer />

      <div className="absolute left-[756px] top-[331px] w-[524px] h-[126px] bg-[#1e6b41] text-white text-[42px] leading-[58px] pt-[6px] text-center font-[Lato,sans-serif] tracking-[0.9px] z-10">
        <b>Right</b> Click on Column
        <br />
        Header
      </div>
    </div>
  )
}
